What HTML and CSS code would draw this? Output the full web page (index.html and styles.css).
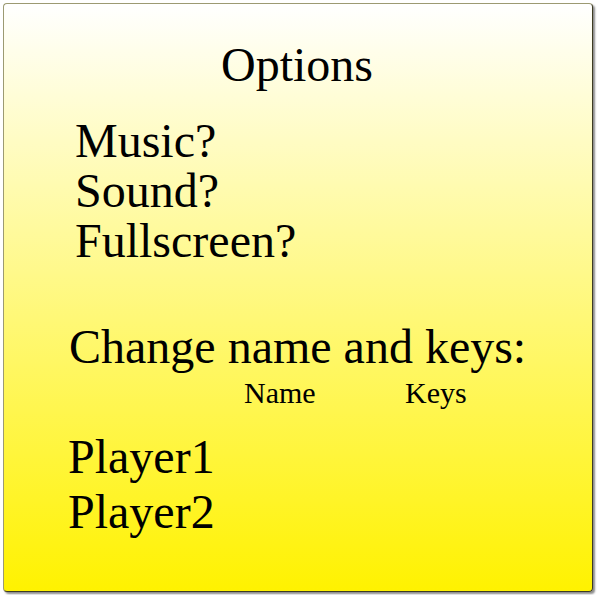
FILE: index.html
```html
<!DOCTYPE html>
<html lang="en">
<head>
    <meta charset="UTF-8">
    <title>Options</title>
    <link rel="stylesheet" href="styles.css">
</head>
<body>

<div class="panel">
    <h1 class="title">Options</h1>

    <!-- toggles -->
    <ul class="toggles">
        <li>Music?</li>
        <li>Sound?</li>
        <li>Fullscreen?</li>
    </ul>

    <h2 class="section">Change name and keys:</h2>

    <div class="players">
        <span></span>
        <span class="col-head">Name</span>
        <span class="col-head">Keys</span>

        <span class="player first">Player1</span>
        <span></span>
        <span></span>

        <span class="player">Player2</span>
        <span></span>
        <span></span>
    </div>
</div>

</body>
</html>
```

FILE: styles.css
```css
html, body {
    margin: 0;
    padding: 0;
}
body {
    font-family: "Liberation Serif", "Times New Roman", serif;
    color: #000;
    background-color: #fff;
}
.panel {
    box-sizing: border-box;
    width: 590px;
    height: 589px;
    margin: 3px;
    padding-top: 36px;
    border: 1px solid #9c9a72;
    border-right-color: #3d3b22;
    border-bottom-color: #3d3b22;
    border-radius: 4px;
    background: linear-gradient(to bottom, #ffffff 0%, #fff200 100%);
    box-shadow: 2px 2px 2px rgba(0, 0, 0, 0.45);
}
.title {
    margin: 0;
    font-size: 48px;
    font-weight: normal;
    line-height: 50px;
    text-align: center;
    padding-right: 2px;
}
.toggles {
    list-style: none;
    margin: 26px 0 0 0;
    padding-left: 71px;
}
.toggles li {
    font-size: 48px;
    line-height: 50px;
}
.section {
    margin: 56px 0 0 0;
    padding-left: 65px;
    font-size: 48px;
    font-weight: normal;
    line-height: 50px;
}
.players {
    display: grid;
    grid-template-columns: 176px 161px 1fr;
    margin-top: 6px;
    padding-left: 64px;
}
.col-head {
    font-size: 30px;
    line-height: 30px;
}
.player {
    font-size: 48px;
    line-height: 50px;
    margin-top: 5px;
}
.player.first {
    margin-top: 24px;
}
```
